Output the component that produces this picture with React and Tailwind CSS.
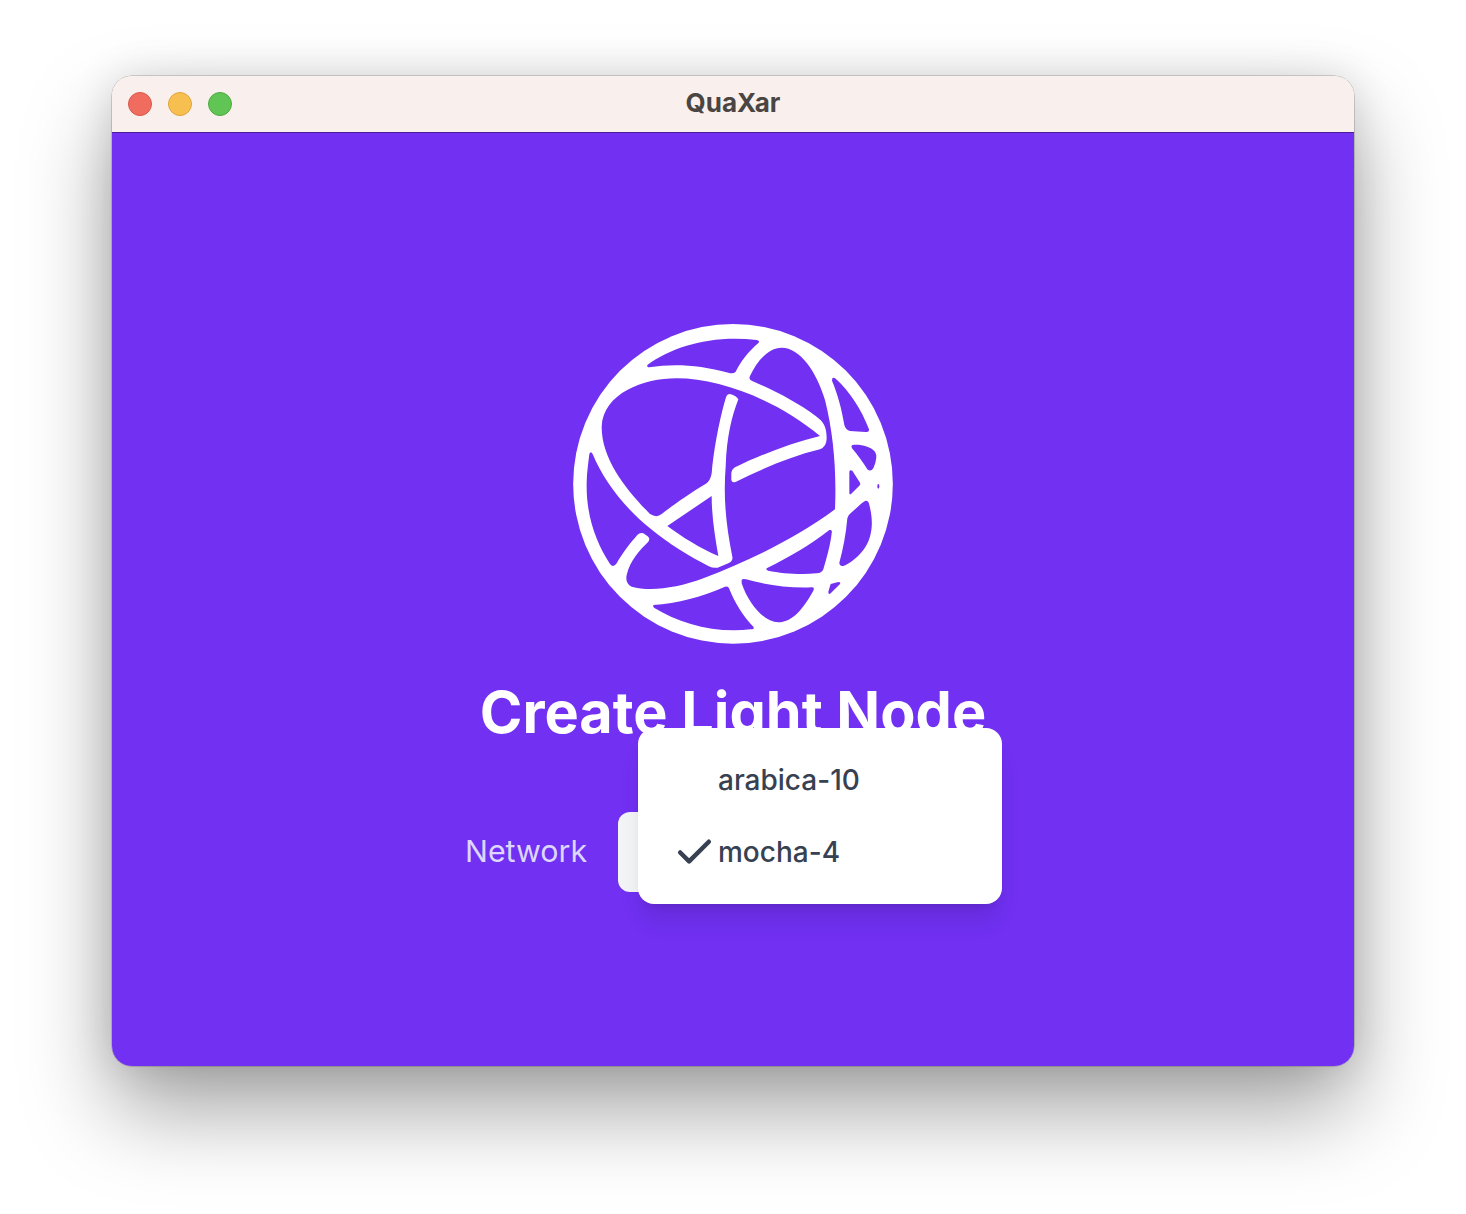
import { Check } from 'lucide-react';

const Logo = () => (
  <svg viewBox="0 0 1035 1035" className="w-[345px] h-[345px] block mr-[1px]">
    <circle cx="519" cy="521.5" r="479.5" fill="#fff" />
    <g fill="#7130f2">
      {/* main cell, the ribbons leave it all joined up */}
      <path d="M825 598 C700 690 570 750 430 805 C350 835 270 845 215 830 Q195 820 200 795 C210 750 240 720 265 695 Q272 685 262 678 L250 670 Q240 666 232 675 C210 700 190 725 170 760 Q160 775 150 762 C110 700 78 620 80 520 C80 490 85 460 88 432 Q92 422 98 432 C130 510 190 590 270 655 C330 705 390 740 445 768 Q465 778 480 770 L505 760 Q520 752 517 740 C497 640 490 560 497 470 C500 380 515 320 535 268 Q530 258 510 252 Q500 252 497 265 C475 340 460 430 455 490 Q452 510 440 520 C390 550 340 585 305 612 Q290 625 270 612 C200 540 125 450 125 350 C130 250 250 205 350 205 C480 205 650 270 780 378 C690 400 600 435 525 472 Q515 478 514 490 L514 510 Q516 520 528 515 C610 475 690 440 780 418 Q800 410 800 385 C800 350 790 335 770 320 C710 275 640 240 575 212 Q565 208 570 198 C590 155 625 113 665 113 C720 113 770 185 795 270 C820 370 830 480 825 598 Z" />
      <path d="M262 165 C340 110 450 75 590 90 Q600 92 596 98 C565 125 545 150 527 185 Q520 193 505 188 C420 165 340 160 268 172 Q260 172 262 165 Z" />
      <path d="M322 648 L455 558 C455 620 465 680 475 738 C420 715 365 680 322 648 Z" />
      <path d="M620 775 C690 740 750 705 808 660 Q818 658 815 670 C812 700 800 745 790 778 Q785 790 770 790 C720 795 665 790 625 782 Q617 780 620 775 Z" />
      <path d="M280 885 C350 880 430 860 495 830 Q505 827 507 835 C525 880 550 920 580 950 Q585 958 572 958 C460 970 360 940 282 893 Q278 888 280 885 Z" />
      <path d="M545 810 Q548 805 558 808 C620 825 690 835 755 832 Q765 832 760 842 C730 895 700 935 655 937 C610 935 565 880 545 820 Z" />
      <path d="M812 822 L835 816 Q843 816 840 822 L812 850 Q805 855 805 845 Z" />
      <path d="M817 205 Q820 200 828 207 C870 245 905 300 927 358 Q928 367 918 366 C900 365 885 364 870 363 Q857 360 853 345 C845 295 832 250 816 212 Z" />
      <path d="M877 405 C900 402 930 408 945 425 Q955 440 940 475 Q932 487 922 478 C908 455 893 435 876 415 Q872 408 877 405 Z" />
      <path d="M868 485 Q870 478 877 482 L900 518 Q903 522 898 527 L873 552 Q868 556 868 548 Z" />
      <ellipse cx="955" cy="529" rx="3" ry="7" />
      <path d="M915 573 Q925 570 928 585 C940 630 940 680 910 720 C890 745 870 760 850 768 Q838 768 838 758 C850 715 858 670 862 625 Q864 615 875 607 L905 580 Z" />
    </g>
  </svg>
);

const App = () => {
  return (
    <div className="w-full min-h-[1214px] bg-white flex justify-center pt-[76px] font-['Inter',sans-serif]">
      <div className="w-[1242px] h-[990px] rounded-[20px] overflow-hidden flex flex-col shadow-[0_0_0_0.5px_rgba(0,0,0,0.3),0_44px_88px_rgba(0,0,0,0.36),0_0_40px_rgba(0,0,0,0.12)]">
        {/* Title bar */}
        <div className="h-[57px] shrink-0 bg-[#f9f0ed] border-b border-[#4c1d95] flex items-center relative">
          <div className="flex gap-4 pl-4">
            <span className="w-6 h-6 rounded-full bg-[#f06c5f] border border-[#d9574c]" />
            <span className="w-6 h-6 rounded-full bg-[#f7bf4f] border border-[#dfa53c]" />
            <span className="w-6 h-6 rounded-full bg-[#61c555] border border-[#4cab40]" />
          </div>
          <div className="absolute inset-0 flex items-center justify-center pb-[3px] text-[26px] font-bold text-[#4a4543]">
            QuaXar
          </div>
        </div>

        {/* Content */}
        <div className="flex-1 bg-[#7130f2] flex flex-col items-center pt-[177px]">
          <Logo />
          <h1 className="mt-[21px] text-[57.6px] leading-[72px] font-bold text-white">Create Light Node</h1>
          <div className="mt-[64px] w-[536px] flex items-center justify-between">
            <span className="text-[30.4px] text-[#ddd6fe]">Network</span>
            <div className="relative w-[383px] h-[80px] rounded-[12px] bg-[#f3f4f6]">
              <div className="absolute left-[20px] top-[-84px] w-[364px] h-[176px] rounded-[16px] bg-white py-[16px] shadow-[0_20px_25px_-5px_rgba(0,0,0,0.1),0_8px_10px_-6px_rgba(0,0,0,0.1)] text-[#374151] text-[28px] font-medium">
                <div className="h-[72px] flex items-center pl-[80px]">arabica-10</div>
                <div className="h-[72px] flex items-center pl-[35px] gap-[2px]">
                  <Check size={43} strokeWidth={2.5} />
                  <span>mocha-4</span>
                </div>
              </div>
            </div>
          </div>
        </div>
      </div>
    </div>
  );
};

export default App;
